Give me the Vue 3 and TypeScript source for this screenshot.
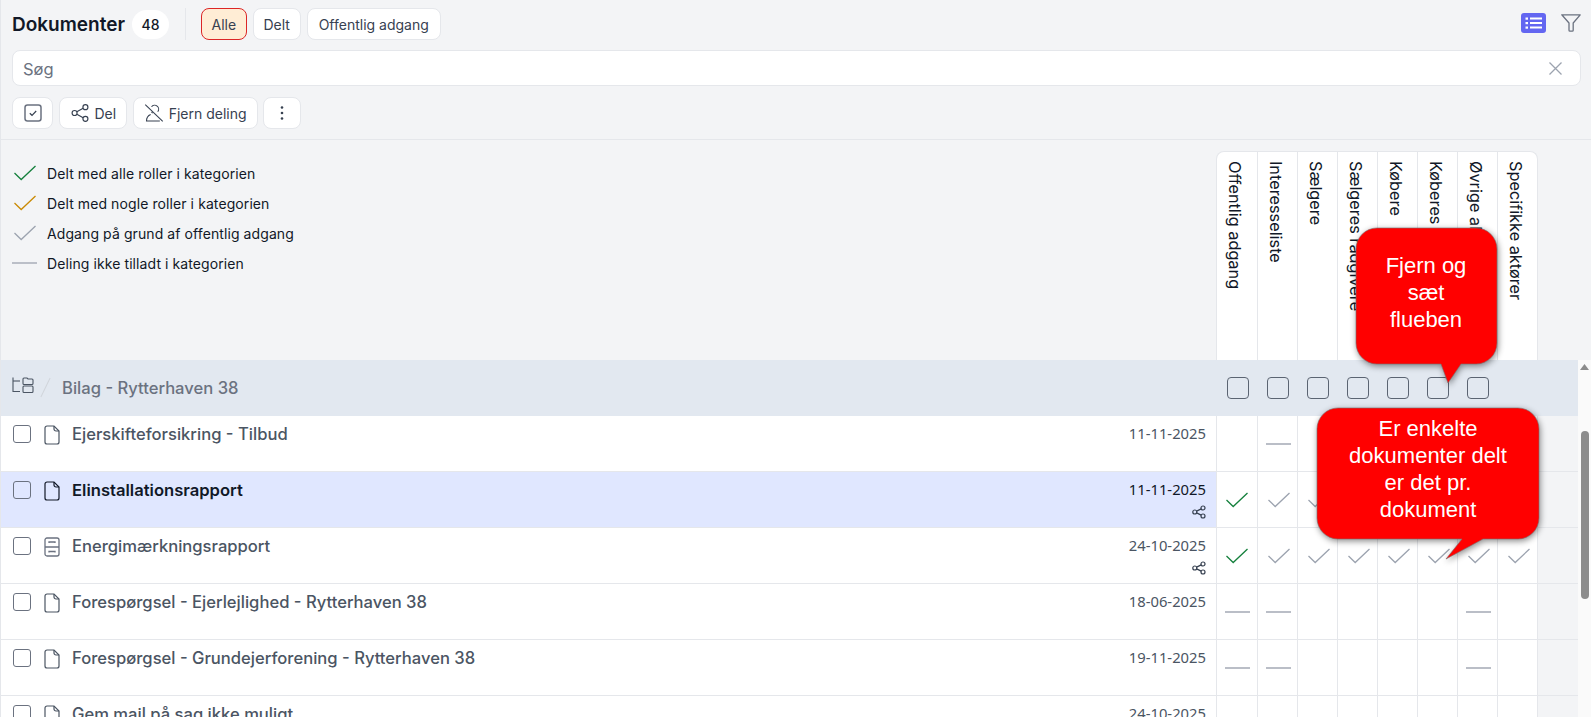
<script setup lang="ts">
type Mark = '' | 'g' | 'o' | 'c' | 'd'
interface Row { name: string; date: string; icon: 'doc' | 'archive'; shared?: boolean; active?: boolean; marks: Mark[] }

const roles = ['Offentlig adgang', 'Interesseliste', 'Sælgere', 'Sælgeres rådgivere', 'Købere', 'Køberes rådgivere', 'Øvrige aktører', 'Specifikke aktører']
const headBoxes = roles.slice(0, 7)

const rows: Row[] = [
  { name: 'Ejerskifteforsikring - Tilbud', date: '11-11-2025', icon: 'doc', marks: ['', 'd', '', '', '', '', '', ''] },
  { name: 'Elinstallationsrapport', date: '11-11-2025', icon: 'doc', shared: true, active: true, marks: ['g', 'c', 'c', 'c', 'c', 'c', 'c', 'c'] },
  { name: 'Energimærkningsrapport', date: '24-10-2025', icon: 'archive', shared: true, marks: ['g', 'c', 'c', 'c', 'c', 'c', 'c', 'c'] },
  { name: 'Forespørgsel - Ejerlejlighed - Rytterhaven 38', date: '18-06-2025', icon: 'doc', marks: ['d', 'd', '', '', '', '', 'd', ''] },
  { name: 'Forespørgsel - Grundejerforening - Rytterhaven 38', date: '19-11-2025', icon: 'doc', marks: ['d', 'd', '', '', '', '', 'd', ''] },
  { name: 'Gem mail på sag ikke muligt', date: '24-10-2025', icon: 'doc', marks: ['', '', '', '', '', '', '', ''] },
]

const legend: { mark: Mark; text: string }[] = [
  { mark: 'g', text: 'Delt med alle roller i kategorien' },
  { mark: 'o', text: 'Delt med nogle roller i kategorien' },
  { mark: 'c', text: 'Adgang på grund af offentlig adgang' },
  { mark: 'd', text: 'Deling ikke tilladt i kategorien' },
]
</script>

<template>
  <div class="page">
    <header class="top">
      <div class="title-row">
        <h1 class="title">Dokumenter</h1>
        <span class="count">48</span>
        <span class="vr"></span>
        <button class="chip chip-on">Alle</button>
        <button class="chip chip-delt">Delt</button>
        <button class="chip">Offentlig adgang</button>
        <span class="spacer"></span>
        <span class="list-btn">
          <svg width="25" height="20" viewBox="0 0 25 20"><rect width="25" height="20" rx="3" fill="#6366f1"/><g fill="#fff"><rect x="4.5" y="4.5" width="2.5" height="2.2"/><rect x="4.5" y="9" width="2.5" height="2.2"/><rect x="4.5" y="13.5" width="2.5" height="2.2"/><rect x="9" y="4.5" width="12" height="2"/><rect x="9" y="9" width="12" height="2"/><rect x="9" y="13.5" width="12" height="2"/></g></svg>
        </span>
        <svg class="funnel" width="20" height="19" viewBox="0 0 20 19" fill="none" stroke="#6b7280" stroke-width="1.3" stroke-linejoin="round"><path d="M.8.8h18.4l-7 8.2v7.2a1 1 0 0 1-1 1H9a1 1 0 0 1-1-1V9z"/></svg>
      </div>
      <div class="search">
        <span class="placeholder">Søg</span>
        <svg width="13" height="13" viewBox="0 0 13 13" stroke="#9ca3af" stroke-width="1.3" fill="none"><path d="M.5.5l12 12M12.5.5l-12 12"/></svg>
      </div>
      <div class="actions">
        <button class="btn btn-icon">
          <svg width="18" height="18" viewBox="0 0 18 18" fill="none" stroke="#6b7280"><rect x="1" y="1" width="16" height="16" rx="2.5" stroke-width="1.5"/><path d="M5.8 9.3l2.200 2 4.200-4.300" stroke="#374151" stroke-width="1.2"/></svg>
        </button>
        <button class="btn">
          <svg width="20" height="20" viewBox="0 0 24 24" fill="none" stroke="#374151" stroke-width="1.4"><circle cx="5.5" cy="12" r="3"/><circle cx="18.5" cy="5" r="3"/><circle cx="18.5" cy="19" r="3"/><path d="M8.2 10.6l7.600-4.200M8.2 13.4l7.600 4.200"/></svg>
          Del
        </button>
        <button class="btn">
          <svg width="20" height="20" viewBox="0 0 24 24" fill="none" stroke="#374151" stroke-width="1.3"><path d="M1.5 2l21 20"/><path d="M9 4.500A4.800 4.800 0 0 1 16.500 10.500M10.500 12c-.6-.3-1.100-.7-1.500-1.200M8 13.800C5 15 3 17.500 3 21.500h16"/></svg>
          Fjern deling
        </button>
        <button class="btn btn-menu">
          <svg width="4" height="16" viewBox="0 0 4 16" fill="#374151"><circle cx="2" cy="2.5" r="1.3"/><circle cx="2" cy="8" r="1.3"/><circle cx="2" cy="13.5" r="1.3"/></svg>
        </button>
      </div>
    </header>

    <section class="heads">
      <ul class="legend">
        <li v-for="l in legend" :key="l.text">
          <svg v-if="l.mark !== 'd'" class="mark" width="24" height="16" viewBox="0 0 24 16" fill="none" :class="'m-' + l.mark" stroke="currentColor" stroke-width="1.3"><path d="M1.500 8l6.700 6.500L22.500 1"/></svg>
          <svg v-else class="mark m-d" width="26" height="16" viewBox="0 0 26 16" stroke="currentColor" stroke-width="1.3"><path d="M0 8h25"/></svg>
          <span>{{ l.text }}</span>
        </li>
      </ul>
      <div class="role-heads">
        <div v-for="r in roles" :key="r" class="role"><span>{{ r }}</span></div>
      </div>
    </section>

    <div class="body">
      <div class="list">
        <div class="folder">
          <svg class="tree" width="22" height="18" viewBox="0 0 22 18" fill="none" stroke="#4b5563" stroke-width="1.1"><path d="M1 .5v14h7"/><path d="M1 4h7"/><path d="M11 2a1 1 0 0 1 1-1h3l1 1h4a1 1 0 0 1 1 1v3.500a1 1 0 0 1-1 1h-8a1 1 0 0 1-1-1zM11 10a1 1 0 0 1 1-1h8a1 1 0 0 1 1 1v4.500a1 1 0 0 1-1 1h-8a1 1 0 0 1-1-1z"/></svg>
          <span class="slash"></span>
          <span class="folder-name">Bilag - Rytterhaven 38</span>
          <span class="spacer"></span>
          <div class="folder-boxes">
            <span v-for="b in headBoxes" :key="b" class="fbox-cell"><span class="fbox"></span></span>
          </div>
          <span class="gutter"></span>
        </div>
        <div v-for="row in rows" :key="row.name" class="row" :class="{ active: row.active }">
          <div class="row-main">
            <span class="cbox"></span>
            <svg v-if="row.icon === 'doc'" class="ficon" width="16" height="20" viewBox="0 0 16 20" fill="none" stroke="currentColor" stroke-width="1.2"><path d="M10 1H3a2 2 0 0 0-2 2v14a2 2 0 0 0 2 2h10a2 2 0 0 0 2-2V6z"/><path d="M10 1v3a2 2 0 0 0 2 2h3"/></svg>
            <svg v-else class="ficon archive" width="16" height="20" viewBox="0 0 16 20" fill="none" stroke="currentColor" stroke-width="1.3"><rect x="1" y="1" width="14" height="18" rx="2"/><path d="M1 10h14M5 6V5h6v1M5 15.500v-1h6v1"/></svg>
            <span class="name">{{ row.name }}</span>
            <span class="spacer"></span>
            <div class="meta">
              <span class="date">{{ row.date }}</span>
              <svg v-if="row.shared" class="share" width="14" height="14" viewBox="0 0 14 14" fill="none" stroke="#374151" stroke-width="1.2"><circle cx="2.800" cy="7" r="2"/><circle cx="11" cy="3" r="2"/><circle cx="11" cy="11" r="2"/><path d="M4.600 6.100l4.600-2.200M4.600 7.900l4.600 2.200"/></svg>
            </div>
          </div>
          <div class="cells">
            <div v-for="(m, i) in row.marks" :key="i" class="cell">
              <svg v-if="m === 'g' || m === 'c'" width="24" height="16" viewBox="0 0 24 16" fill="none" :class="'m-' + m" stroke="currentColor" stroke-width="1.3"><path d="M1.500 8l6.700 6.500L22.500 1"/></svg>
              <svg v-else-if="m === 'd'" class="dash m-d" width="25" height="2" viewBox="0 0 25 2" stroke="currentColor" stroke-width="1.4"><path d="M0 1h25"/></svg>
            </div>
          </div>
          <span class="gutter"></span>
        </div>
      </div>
      <div class="scrollbar">
        <svg width="9" height="6" viewBox="0 0 9 6" class="arrow"><path d="M4.500 0L9 6H0z" fill="#8c8c8c"/></svg>
        <div class="thumb"></div>
      </div>
    </div>

    <div class="callout c1">
      <svg class="bubble" width="147" height="162" viewBox="0 0 147 162"><path d="M22 1h99a21 21 0 0 1 21 21v94a21 21 0 0 1-21 21h-15l-13 19-7-19H22a21 21 0 0 1-21-21V22A21 21 0 0 1 22 1z" fill="#f00" stroke="#7b6f6f" stroke-width=".6"/></svg>
      <div class="bubble-text t1">Fjern og<br>sæt<br>flueben</div>
    </div>
    <div class="callout c2">
      <svg class="bubble" width="227" height="156" viewBox="0 0 227 156"><path d="M22 1h180a21 21 0 0 1 21 21v89a21 21 0 0 1-21 21h-35l-37 20 16-20H22a21 21 0 0 1-21-21V22A21 21 0 0 1 22 1z" fill="#f00" stroke="#7b6f6f" stroke-width=".6"/></svg>
      <div class="bubble-text t2">Er enkelte<br>dokumenter delt<br>er det pr.<br>dokument</div>
    </div>
  </div>
</template>

<style>
html, body { margin: 0; background: #f3f4f6; }
</style>

<style scoped>
.page { position: relative; width: 1591px; height: 717px; overflow: hidden; display: flex; flex-direction: column; box-sizing: border-box; background: #f3f4f6; border-left: 1px solid #e5e7eb; font-family: Inter, "Noto Sans", sans-serif; color: #111827; }
.spacer { flex: 1; }
button { font: inherit; }
.top { height: 140px; box-sizing: border-box; border-bottom: 1px solid #e5e7eb; padding: 8px 10px 0 11px; flex: none; }
.title-row { display: flex; align-items: center; height: 32px; }
.title { margin: 2px 0 0; font-size: 19px; font-weight: 600; color: #111827; line-height: 30px; }
.count { margin-left: 7px; width: 37px; height: 29px; border-radius: 15px; background: #fff; font-size: 14px; font-weight: 500; display: flex; align-items: center; justify-content: center; }
.vr { width: 1px; height: 32px; background: #e5e7eb; margin: 0 15px 0 16px; }
.chip { height: 32px; margin-right: 6px; padding: 0 11px; border: 1px solid #e5e7eb; border-radius: 8px; background: #fff; font-size: 14px; color: #374151; }
.chip-on { background: #ffedd5; border-color: #dc2626; padding: 0 9.5px; }
.chip-delt { min-width: 48px; padding: 0; }
.list-btn { display: flex; margin: -2px 15px 0 0; }
.funnel { margin-top: -1px; }
.search { margin-top: 10px; height: 36px; box-sizing: border-box; border: 1px solid #e5e7eb; border-radius: 8px; background: #fff; display: flex; align-items: center; justify-content: space-between; padding: 0 18px 0 10px; }
.placeholder { font-size: 16.5px; color: #6b7280; padding-top: 1px; }
.actions { display: flex; gap: 5.5px; margin-top: 11px; }
.btn { height: 32px; box-sizing: border-box; border: 1px solid #e5e7eb; border-radius: 8px; background: #fff; display: flex; align-items: center; gap: 5px; padding: 0 10px; font-size: 14px; color: #374151; }
.btn-icon { width: 41px; justify-content: center; padding: 0; }
.btn-menu { width: 38px; justify-content: center; padding: 0; }
.heads { height: 220px; flex: none; display: flex; justify-content: space-between; }
.legend { list-style: none; margin: 0; padding: 18px 0 0 11px; }
.legend li { display: flex; align-items: center; height: 30px; font-size: 14px; letter-spacing: .09px; color: #111827; }
.legend .mark { margin-right: 9px; width: 26px; }
.m-g { color: #15803d; }
.m-o { color: #ca8a04; }
.m-c, .m-d { color: #9ca3af; }
.role-heads { display: flex; margin: 11px 53px 0 0; border: 1px solid #e5e7eb; border-bottom: 0; border-radius: 8px 8px 0 0; background: #fff; overflow: hidden; }
.role { width: 40px; box-sizing: border-box; border-right: 1px solid #e5e7eb; display: flex; justify-content: center; padding: 9px 4px 0 0; }
.role:first-child { width: 41px; }
.role:last-child { border-right: 0; width: 39px; }
.role span { writing-mode: vertical-rl; font-size: 16.3px; color: #111827; white-space: nowrap; }
.body { flex: 1; display: flex; min-height: 0; }
.list { flex: 1; min-width: 0; }
.folder { height: 56px; box-sizing: border-box; background: #e2e8f0; display: flex; align-items: center; padding-left: 11px; }
.tree { margin-top: -4px; }
.slash { width: 1px; height: 21px; background: #d1d5db; transform: rotate(26deg); margin: -1px 16px 0 11px; }
.folder-name { font-size: 16.6px; font-weight: 500; color: #6b7280; }
.folder-boxes { display: flex; width: 321px; }
.fbox-cell { width: 40px; display: flex; justify-content: center; }
.fbox-cell:first-child { width: 41px; }
.fbox { width: 22px; height: 22px; box-sizing: border-box; border: 1.8px solid #5b6472; border-radius: 4px; }
.gutter { width: 40px; flex: none; }
.row { height: 56px; box-sizing: border-box; border-bottom: 1px solid #e5e7eb; display: flex; background: #f3f4f6; }
.row-main { flex: 1; min-width: 0; display: flex; align-items: flex-start; background: #fff; padding: 8px 10px 0 12px; border-right: 1px solid #e5e7eb; color: #4b5563; }
.active .row-main { background: #e0e7ff; color: #111827; }
.cbox { width: 18px; height: 18px; box-sizing: border-box; border: 1.3px solid #6b7280; border-radius: 3px; background: #fff; margin: 1px 13px 0 0; }
.active .cbox { background: transparent; }
.ficon { margin: 1px 12px 0 0; }
.archive { color: #6b7280; }
.name { font-size: 16.6px; font-weight: 500; line-height: 20px; }
.active .name { font-weight: 600; }
.meta { display: flex; flex-direction: column; align-items: flex-end; gap: 6px; font-size: 14px; line-height: 18px; }
.date { display: block; font-family: "Noto Sans", Inter, sans-serif; font-size: 14.8px; }
.share { margin-top: 1px; }
.cells { display: flex; background: #fff; }
.cell { width: 40px; box-sizing: border-box; border-right: 1px solid #e5e7eb; display: flex; align-items: center; justify-content: center; padding-left: 2px; }
.cell:first-child { width: 41px; padding-left: 0; }
.scrollbar { width: 13px; flex: none; background: #fafafa; position: relative; display: flex; flex-direction: column; align-items: center; padding-top: 4px; box-sizing: border-box; }
.thumb { width: 8px; height: 168px; margin-top: 61px; border-radius: 4px; background: #8c8c8c; }
.callout { position: absolute; }
.c1 { left: 1354px; top: 227px; }
.c2 { left: 1315px; top: 407px; }
.bubble { display: block; filter: drop-shadow(1px 2px 3px rgba(0,0,0,.45)); }
.bubble-text { position: absolute; text-align: center; color: #fff; font-family: "Liberation Sans", Arial, sans-serif; font-size: 22px; line-height: 27px; }
.t1 { left: 0; width: 142px; top: 25px; }
.t2 { left: 0; width: 224px; top: 8px; }
</style>
